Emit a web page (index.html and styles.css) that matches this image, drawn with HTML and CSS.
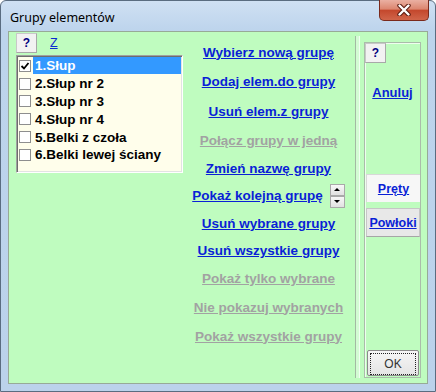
FILE: index.html
```html
<!DOCTYPE html>
<html lang="pl">
  <head>
    <meta charset="UTF-8">
    <meta name="viewport" content="width=device-width, initial-scale=1.0">
    <title>Grupy elementów</title>
    <link rel="stylesheet" href="styles.css">
  </head>
  <body>
    <div class="window">
      <div class="titlebar">
        <span class="title">Grupy elementów</span>
        <button class="close" title="Zamknij">
          <svg width="16" height="12" viewBox="0 0 16 12">
            <path d="M3.5 1.5 L12.5 10.5 M12.5 1.5 L3.5 10.5" stroke="#5b1c12" stroke-width="4.4" stroke-linecap="round"/>
            <path d="M3.5 1.5 L12.5 10.5 M12.5 1.5 L3.5 10.5" stroke="#ffffff" stroke-width="2.4" stroke-linecap="round"/>
          </svg>
        </button>
      </div>

      <div class="client">
        <div class="groups">
          <div class="groups-head">
            <button class="help">?</button>
            <a href="#" class="sort">Z</a>
          </div>
          <ul class="list">
            <li class="item selected">
              <span class="check">
                <svg width="10" height="10" viewBox="0 0 10 10"><path d="M1.5 5 L4 7.5 L8.5 2" fill="none" stroke="#000" stroke-width="1.8"/></svg>
              </span>
              <span class="label">1.Słup</span>
            </li>
            <li class="item"><span class="check"></span><span class="label">2.Słup nr 2</span></li>
            <li class="item"><span class="check"></span><span class="label">3.Słup nr 3</span></li>
            <li class="item"><span class="check"></span><span class="label">4.Słup nr 4</span></li>
            <li class="item"><span class="check"></span><span class="label">5.Belki z czoła</span></li>
            <li class="item"><span class="check"></span><span class="label">6.Belki lewej ściany</span></li>
          </ul>
        </div>

        <div class="actions">
          <a href="#" class="link">Wybierz nową grupę</a>
          <a href="#" class="link">Dodaj elem.do grupy</a>
          <a href="#" class="link">Usuń elem.z grupy</a>
          <a href="#" class="link off">Połącz grupy w jedną</a>
          <a href="#" class="link">Zmień nazwę grupy</a>
          <div class="next-row">
            <a href="#" class="link">Pokaż kolejną grupę</a>
            <div class="spin">
              <button class="spin-btn up"></button>
              <button class="spin-btn down"></button>
            </div>
          </div>
          <a href="#" class="link">Usuń wybrane grupy</a>
          <a href="#" class="link">Usuń wszystkie grupy</a>
          <a href="#" class="link off">Pokaż tylko wybrane</a>
          <a href="#" class="link off">Nie pokazuj wybranych</a>
          <a href="#" class="link off">Pokaż wszystkie grupy</a>
        </div>

        <div class="groove"></div>

        <div class="side">
          <button class="help">?</button>
          <a href="#" class="link cancel">Anuluj</a>
          <a href="#" class="tab active">Pręty</a>
          <a href="#" class="tab plain">Powłoki</a>
          <button class="ok"><span>OK</span></button>
        </div>
      </div>
    </div>
  </body>
</html>
```

FILE: styles.css
```css
body {
    margin: 0;
    font-family: "Liberation Sans", Arial, sans-serif;
}
.window {
    width: 436px;
    height: 392px;
    box-sizing: border-box;
    border: 1px solid #5a6c80;
    border-radius: 6px 6px 0 0;
    background: linear-gradient(#cfe0f3, #bdd4ec 30px, #bbd2eb);
    padding: 0 7px 7px 7px;
    display: flex;
    flex-direction: column;
}
.titlebar {
    height: 30px;
    display: flex;
    justify-content: space-between;
    align-items: flex-start;
}
.title {
    padding: 9px 0 0 2px;
    font-family: "Noto Sans", sans-serif;
    font-size: 12.5px;
    line-height: 16px;
    color: #000;
}
.close {
    margin: -1px -1px 0 0;
    width: 50px;
    height: 21px;
    padding: 0;
    border: 1px solid #7a2a1c;
    border-top: none;
    border-radius: 0 0 5px 5px;
    background: linear-gradient(#eab0a2, #dc8670 45%, #c4482d 52%, #d0654a);
    display: flex;
    align-items: center;
    justify-content: center;
}
.client {
    flex: 1;
    display: flex;
    background: #bffcbf;
    border: 1px solid #97aa97;
}

/* left: group list */
.groups {
    width: 167px;
    padding: 1px 0 0 7px;
    margin-right: 3px;
}
.groups-head {
    display: flex;
    align-items: center;
    height: 20px;
}
.help {
    width: 21px;
    height: 20px;
    padding: 0;
    box-sizing: border-box;
    border: 1px solid #c8c8c8;
    border-right-color: #a8a8a8;
    border-bottom-color: #a8a8a8;
    background: #f2f2f2;
    color: #000080;
    font-family: "Liberation Sans", Arial, sans-serif;
    font-weight: bold;
    font-size: 12px;
}
.sort {
    margin-left: 13px;
    color: #0b2bd0;
    font-size: 12.5px;
    text-decoration: underline;
}
.list {
    margin: 2px 0 0;
    padding: 0;
    list-style: none;
    height: 118px;
    box-sizing: border-box;
    border: 1px solid;
    border-color: #a0a0a0 #ffffff #ffffff #a0a0a0;
    box-shadow: inset 1px 1px 0 #6d6d6d, inset -1px -1px 0 #e3e3e3;
    background: #fffeeb;
    padding: 1px 1px 0 1px;
}
.item {
    display: flex;
    align-items: center;
    height: 17.8px;
}
.check {
    width: 12px;
    height: 12px;
    margin-left: 1px;
    box-sizing: border-box;
    border: 1px solid #8e8e8e;
    background: #fff;
    display: flex;
    align-items: center;
    justify-content: center;
}
.label {
    flex: 1;
    margin-left: 2px;
    padding-left: 2px;
    line-height: 17px;
    font-weight: bold;
    font-size: 13.5px;
    color: #000;
}
.selected .label {
    background: #3399ff;
    color: #fff;
}

/* middle: actions */
.actions {
    width: 165px;
    padding-top: 5.5px;
    display: grid;
    grid-template-rows: 29px 30px 30px 28px 27px 28px 27px 28px 28px 29px 29px;
    justify-items: center;
    align-items: center;
    align-content: start;
}
.link {
    color: #0a1fd6;
    font-weight: bold;
    font-size: 13.5px;
    line-height: 15px;
    text-decoration: underline;
    white-space: nowrap;
}
.link.off {
    color: #a2a2a2;
}
.next-row {
    display: flex;
    align-items: center;
    gap: 7px;
}
.spin {
    display: flex;
    flex-direction: column;
}
.spin-btn {
    width: 15px;
    height: 12px;
    padding: 0;
    box-sizing: border-box;
    border: 1px solid #a9a9a9;
    background: linear-gradient(#f8f8f8, #e1e1e1);
    display: flex;
    align-items: center;
    justify-content: center;
}
.up::before,
.down::before {
    content: "";
    border-left: 3px solid transparent;
    border-right: 3px solid transparent;
}
.up::before {
    border-bottom: 3px solid #000;
}
.down::before {
    border-top: 3px solid #000;
}
.groove {
    width: 5px;
    margin: 4px 0 5px 4px;
    box-sizing: border-box;
    border-left: 1px solid #a3b9a3;
    border-right: 1px solid #f0fff0;
    background: #d3fcd3;
}

/* right: side panel */
.side {
    width: 57px;
    margin: 10px 0 5px 4px;
    box-sizing: border-box;
    border: 1px solid #aabcaa;
    box-shadow: inset 1px 1px 0 #eefeee;
    display: flex;
    flex-direction: column;
    align-items: center;
}
.side .help {
    align-self: flex-start;
}
.cancel {
    margin-top: 21.5px;
    font-size: 13px;
}
.tab {
    align-self: stretch;
    margin-left: 1px;
    box-sizing: border-box;
    display: flex;
    align-items: center;
    justify-content: center;
    color: #0a1fd6;
    font-weight: bold;
    font-size: 12.5px;
    text-decoration: underline;
}
.tab.active {
    margin-top: 74.5px;
    height: 28px;
    background: #f7f7f7;
    border-top: 1px solid #d8d8d8;
    border-left: 1px solid #d8d8d8;
}
.tab.plain {
    margin-top: 6px;
    height: 29px;
    background: #e8e8e8;
    border: 1px solid #c6c6c6;
    border-bottom-color: #a6a6a6;
}
.ok {
    margin: auto 0 1px 1px;
    width: 52px;
    height: 26px;
    padding: 2px;
    box-sizing: border-box;
    border: 1px solid #8a8a8a;
    border-radius: 2px;
    background: linear-gradient(#f6f6f6, #e4e4e4);
    font-family: "Liberation Sans", Arial, sans-serif;
    font-size: 12px;
    color: #333;
}
.ok span {
    display: flex;
    align-items: center;
    justify-content: center;
    height: 100%;
    border: 1px dotted #222;
}
```
